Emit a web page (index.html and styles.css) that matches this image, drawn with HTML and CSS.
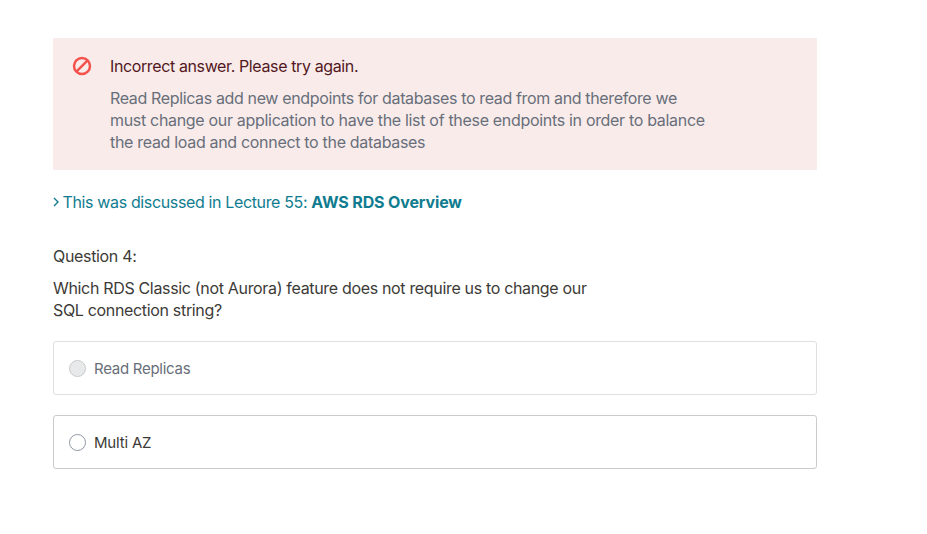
FILE: index.html
```html
<!DOCTYPE html>
<html lang="en">
<head>
<meta charset="utf-8">
<title>Quiz</title>
<link rel="stylesheet" href="styles.css">
</head>
<body>
<main class="quiz">
  <section class="alert">
    <svg class="alert-icon" viewBox="0 0 20 20"><circle cx="10" cy="10" r="8"/><path d="M4.4 15.6 15.6 4.4"/></svg>
    <div>
      <p class="alert-title">Incorrect answer. Please try again.</p>
      <p class="alert-text"><span class="tight">Read Replicas add new endpoints for databases to read from and therefore we</span><br>must change our application to have the list of these endpoints in order to balance<br>the read load and connect to the databases</p>
    </div>
  </section>
  <a class="lecture"><svg class="chevron" viewBox="0 0 6 10"><path d="M1 1 5 5 1 9"/></svg><span class="tight">This was discussed in Lecture 55: </span><b class="lecture-name">AWS RDS Overview</b></a>
  <p class="label">Question 4:</p>
  <p class="question">Which RDS Classic (not Aurora) feature does not require us to change our<br>SQL connection string?</p>
  <div class="option disabled"><span class="radio"></span><span class="option-text">Read Replicas</span></div>
  <div class="option"><span class="radio"></span><span class="option-text">Multi AZ</span></div>
</main>
</body>
</html>
```
FILE: styles.css
```css
body { margin: 0; background: #fff; color: #3c3b37; font: 16px/22px Inter, sans-serif; letter-spacing: -0.33px; }
p { margin: 0; }
.quiz { width: 764px; margin: 38px 0 0 53px; }
.alert { display: flex; box-sizing: border-box; height: 132px; padding: 17px 19px; background: #f9ebea; }
.alert-icon { width: 20px; height: 20px; margin: 1px 18px 0 0; fill: none; stroke: #f4524d; stroke-width: 2.5; }
.alert-title { color: #521822; margin-bottom: 10px; letter-spacing: -0.38px; }
.alert-text { color: #686f7a; letter-spacing: -0.315px; }
.tight { letter-spacing: -0.36px; }
.lecture { display: flex; align-items: center; margin-top: 21px; color: #0f7c90; white-space: pre; }
.lecture-name { letter-spacing: -0.14px; }
.chevron { width: 6px; height: 10px; margin-right: 3.5px; fill: none; stroke: currentColor; stroke-width: 1.4; }
.label { margin-top: 32px; }
.question { margin: 10px 0 20px; }
.option { display: flex; align-items: center; box-sizing: border-box; height: 54px; margin-bottom: 20px; padding-left: 15px; border: 1px solid #cacbcc; border-radius: 3px; font-size: 15px; letter-spacing: -0.19px; }
.option-text { padding-top: 2px; }
.radio { box-sizing: border-box; width: 17px; height: 17px; margin-right: 8px; border: 1px solid #8f96a3; border-radius: 50%; }
.disabled { color: #686f7a; border-color: #dedfe0; letter-spacing: -0.27px; }
.disabled .radio { background: #e8e9eb; border-color: #cacaca; }
```
